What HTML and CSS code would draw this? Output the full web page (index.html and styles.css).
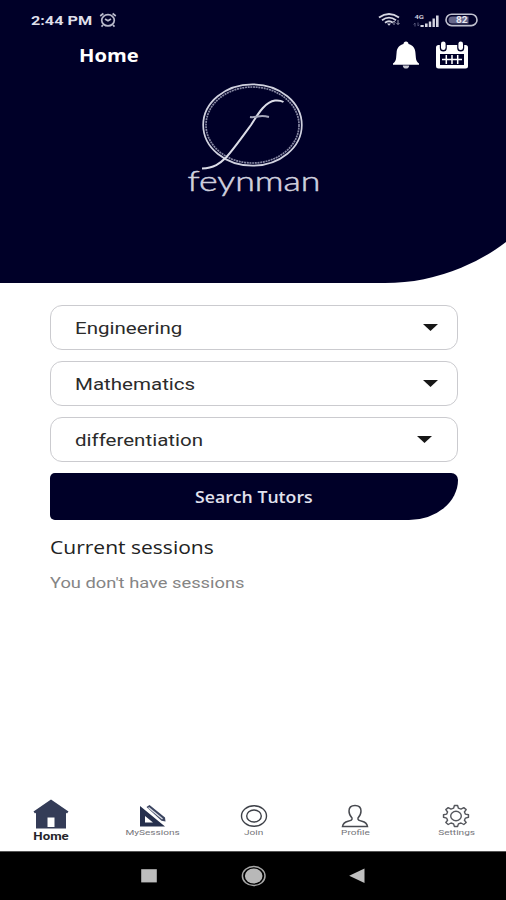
FILE: index.html
```html
<!DOCTYPE html>
<html lang="en">
<head>
<meta charset="utf-8">
<title>Feynman</title>
<link rel="stylesheet" href="styles.css">
</head>
<body>
<div class="app">
  <header class="hero">
    <div class="status">
      <span class="t time">2:44 PM</span>
      <svg class="alarm" width="18" height="16" viewBox="0 0 18 16" fill="none" stroke="#b9bacb" stroke-width="1.7"><ellipse cx="9" cy="8.3" rx="6.3" ry="5.6"/><path d="M1.200 4 4.400 1.500M16.800 4 13.600 1.500M4 13l-1.500 1.600M14 13l1.500 1.600M6 7l3 1.800L12 7"/></svg>
      <svg class="wifi" width="24" height="14" viewBox="0 0 24 14" fill="none" stroke="#d5d6e2" stroke-width="1.900"><path d="M1 4.500Q11 -2.500 21 4.500M4 7.200Q11 2 18 7.200M7 9.800Q11 6.600 15 9.800"/><path d="M9 10.500h4l-2 2.300z" fill="#d5d6e2" stroke="none"/><path d="M16 12V8M14.500 9.500 16 8l1.500 1.500M20 7v4.500M18.500 10l1.500 1.500 1.500-1.500" stroke-width="1" stroke="#9a9bb0"/></svg>
      <svg class="signal" width="28" height="15" viewBox="0 0 28 15"><g fill="#d5d6e2"><path d="M8.500 12h3.200v2H8.500zM13 10.500h2.600V14H13zM16.800 8.500h2.400V14h-2.400zM20.500 5.500h2.400V14h-2.400zM24 2.500h2.600V14H24z"/></g><text x="2.500" y="6" class="net" textLength="9.500" lengthAdjust="spacingAndGlyphs">4G</text><path d="M3 10v3.500M1.700 11.500 3 10M6 9.500V13M7.300 11.700 6 13" stroke="#56577a" fill="none"/></svg>
      <svg class="battery" width="33" height="14" viewBox="0 0 33 14"><rect x="1" y="1.200" width="31" height="11.400" rx="5.700" fill="none" stroke="#c0c1d0" stroke-width="1.600"/><path d="M7 3.500h16.500v7H7A3.500 3.500 0 0 1 7 3.500z" fill="#66678a"/><text x="11" y="10.400" class="level" textLength="11.500" lengthAdjust="spacingAndGlyphs">82</text></svg>
    </div>
    <div class="titlebar">
      <h1 class="t title">Home</h1>
      <svg class="bell" width="28" height="28" viewBox="0 0 28 28" fill="#fff"><path d="M14 .500c1.500 0 2.500 1 2.500 2.500 4.300 1.200 6.600 4.300 6.900 8.500l.5 5.500c.2 2.500 1.300 4.100 3.100 5.500v1.300H1v-1.300c1.800-1.400 2.900-3 3.100-5.500l.5-5.500C4.900 7.300 7.200 4.200 11.500 3c0-1.500 1-2.500 2.500-2.500z"/><path d="M10.800 24.500h6.400c0 2-1.400 3.100-3.200 3.100s-3.200-1.100-3.200-3.100z" fill="#c8c8d2"/></svg>
      <svg class="calendar" width="34" height="28" viewBox="0 0 34 28"><rect x="1" y="4" width="32" height="23.500" rx="2.500" fill="#fff"/><path d="M4.800 0h7v7q0 3.500-3.500 3.500T4.800 7zM22.200 0h7v7q0 3.500-3.500 3.500T22.200 7z" fill="#000028"/><rect x="6" y=".500" width="4.600" height="8.500" rx="2.300" fill="#fff"/><rect x="23.400" y=".500" width="4.600" height="8.500" rx="2.300" fill="#fff"/><path d="M5 13h24v11H5z" fill="#000028"/><path d="M11.300 14v9M17 14v9M22.700 14v9M7 18.500h20" stroke="#fff" stroke-width="1.500"/></svg>
    </div>
    <svg class="logo" width="140" height="118" viewBox="0 0 140 118" fill="none"><ellipse cx="69.500" cy="42" rx="49.300" ry="40.700" stroke="#d0d1df" stroke-width="1.700"/><ellipse cx="69.500" cy="42" rx="46.500" ry="38" stroke="#8788a3" stroke-width="1.700" stroke-dasharray="2 .700"/><path d="M19 85.500C31 85 37 80.500 43 74.500 50 67 60 53 68 42 76 29 83 18.500 92 17.500c4-.400 6 0 8.500 1.500" stroke="#dcdde8" stroke-width="2"/><path d="M67 34q3 .5 8-.500t11 .500" stroke="#a5a6ba" stroke-width="2"/><text x="4.500" y="108" class="wordmark" textLength="133" lengthAdjust="spacingAndGlyphs">feynman</text></svg>
  </header>
  <main class="content">
    <div class="select"><span class="t engineering">Engineering</span><i class="caret"></i></div>
    <div class="select"><span class="t mathematics">Mathematics</span><i class="caret"></i></div>
    <div class="select inset"><span class="t differentiation">differentiation</span><i class="caret"></i></div>
    <button class="search"><span class="t search-label">Search Tutors</span></button>
    <h2 class="t sessions">Current sessions</h2>
    <p class="t empty">You don't have sessions</p>
  </main>
  <nav class="tabs">
    <a class="tab active"><svg width="36" height="30" viewBox="0 0 36 30"><path d="M18 .500 35.500 12.500 34 14.500l-1-.700V29.500H3V13.800l-1 .700L.500 12.500z" fill="#343c57"/><path d="M14.500 18.500h7v9.500h-7z" fill="#fff"/></svg><span class="t">Home</span></a>
    <a class="tab"><svg width="28" height="24" viewBox="0 0 28 24"><path fill-rule="evenodd" d="M1 2 26 22.500H1zM6 12v6.500h8z" fill="#26304d"/><path d="m7.500 3 3-2L26 13.500l.5 4-4-.7z" fill="#3c4560"/><path d="m9.500 3.500 14 11.500" stroke="#dfe2ea" stroke-width="1.300"/></svg><span class="t">MySessions</span></a>
    <a class="tab"><svg width="28" height="24" viewBox="0 0 28 24" fill="none" stroke="#3e4148" stroke-width="1.400"><ellipse cx="14" cy="12" rx="12.500" ry="10.300"/><ellipse cx="14" cy="12" rx="7.300" ry="6"/></svg><span class="t">Join</span></a>
    <a class="tab"><svg width="28" height="24" viewBox="0 0 28 24" fill="none" stroke="#484a50" stroke-width="1.500"><path d="M14 1.500c4 0 6 2.500 6 5.500s-1.500 5.500-3 7c-.5 2 1 2.500 4 3.200 3.500.8 5 2.300 5.500 5.300h-25c.5-3 2-4.500 5.500-5.300 3-.7 4.500-1.200 4-3.200-1.500-1.500-3-4-3-7s2-5.500 6-5.500z"/></svg><span class="t">Profile</span></a>
    <a class="tab"><svg width="28" height="24" viewBox="0 0 28 24" fill="none" stroke="#55575d" stroke-width="1.400" stroke-linejoin="round"><path d="M11.600 4.200 12.400 1.500h3.200l.8 2.700 2.600.9 2.800-1.500 2.400 2-1.800 2.400 1 2.100 3.100.7v2.500l-3.100.8-1 2.100 1.800 2.300-2.400 2-2.800-1.500-2.600.9-.8 2.600h-3.200l-.8-2.600-2.600-.9-2.800 1.500-2.400-2 1.800-2.300-1-2.100-3.100-.8v-2.500l3.100-.7 1-2.100L3.800 5.600l2.400-2L9 5.100z"/><ellipse cx="14" cy="12" rx="5.300" ry="4.700"/></svg><span class="t">Settings</span></a>
  </nav>
  <div class="sysbar">
    <svg width="18" height="16" viewBox="0 0 18 16"><path d="M1.200 1.200h15.600v13.200H1.200z" fill="#bdbdbd"/></svg>
    <svg width="26" height="22" viewBox="0 0 26 22"><ellipse cx="13.700" cy="11" rx="11.300" ry="9.500" fill="none" stroke="#a8a8a8" stroke-width="1.500"/><ellipse cx="13.700" cy="11" rx="8.800" ry="7.400" fill="#b8b8b8"/></svg>
    <svg width="18" height="16" viewBox="0 0 18 16"><path d="M16.500.500v14.500L1.200 7.700z" fill="#c0c0c0"/></svg>
  </div>
</div>
</body>
</html>
```
FILE: styles.css
```css
* { box-sizing: border-box; }
body { margin: 0; background: #fff; font-family: Roboto, "Liberation Sans", sans-serif; }
.app { width: 506px; height: 900px; display: flex; flex-direction: column; overflow: hidden; }
.t { display: block; white-space: nowrap; margin: 0; transform-origin: left center; }

.hero { position: relative; z-index: 0; height: 283px; overflow: hidden; color: #fff; }
.hero::before { content: ""; position: absolute; z-index: -1; inset: 0 -78px 0.5px 0; background: #000028; border-bottom-right-radius: 199px; }
.status { display: flex; align-items: center; height: 40px; padding: 0 28px 0 31px; }
.time { width: 61px; font: 700 13.5px/16px Roboto, sans-serif; color: #dedfea; transform: scaleX(1.2); }
.alarm { margin-left: 7px; }
.wifi { margin-left: auto; }
.signal { margin-left: 10px; }
.battery { margin-left: 5px; }
.net { font: 700 6px Roboto, sans-serif; fill: #c9cad8; }
.level { font: 700 9px Roboto, sans-serif; fill: #e8e8f0; }
.titlebar { display: flex; align-items: center; height: 30px; padding: 0 37px 0 79px; }
.title { font: 700 18.5px/28px "Open Sans", sans-serif; transform: scaleX(1.09); }
.bell { margin-left: auto; }
.calendar { margin-left: 15px; }
.logo { display: block; margin: 13px 0 0 183px; }
.wordmark { font: 300 27px Lato, sans-serif; fill: #d0d1df; stroke: #d0d1df; stroke-width: 0.5px; }

.content { display: flex; flex-direction: column; padding: 22px 48px 0 50px; flex: 1; }
.select { display: flex; align-items: center; justify-content: space-between; height: 45px; margin-bottom: 11px; padding: 0 19px 0 24px; border: 1.5px solid #cbcbcf; border-radius: 12px; font-size: 17px; color: #2b2b2b; }
.inset { padding-right: 25px; }
.caret { width: 15px; height: 7px; background: #171717; clip-path: polygon(0 0, 100% 0, 50% 100%); }
.engineering, .mathematics, .differentiation { transform: scaleX(1.207); }
.search { display: flex; align-items: center; height: 47px; padding: 0 0 0 145px; border: 0; background: #000028; color: #e2e2ee; border-radius: 5px 7px 50px 5px / 5px 7px 41px 5px; }
.search-label { font: 600 17px/24px "Open Sans", sans-serif; transform: scaleX(1.04); }
.sessions { margin-top: 14px; font: 400 19px/26px "Open Sans", sans-serif; color: #222; transform: scaleX(1.107); }
.empty { margin-top: 14px; font-size: 15px; line-height: 18px; color: #858585; transform: scaleX(1.22); }

.tabs { display: grid; grid-template-columns: repeat(5, 101.200px); height: 58px; padding-left: 1px; }
.tab { display: flex; flex-direction: column; align-items: center; padding-top: 11px; font-size: 8px; line-height: 10px; color: #75757a; }
.tab .t { transform-origin: center; transform: scaleX(1.26); }
.active { padding: 6px 2px 0 0; font-size: 10.5px; font-weight: 700; color: #25252a; }
.active .t { margin-top: 3px; }
.sysbar { display: grid; grid-template-columns: repeat(3, 104px); justify-content: center; place-items: center; height: 49px; background: #000; border-top: 1px solid #555; }
```
